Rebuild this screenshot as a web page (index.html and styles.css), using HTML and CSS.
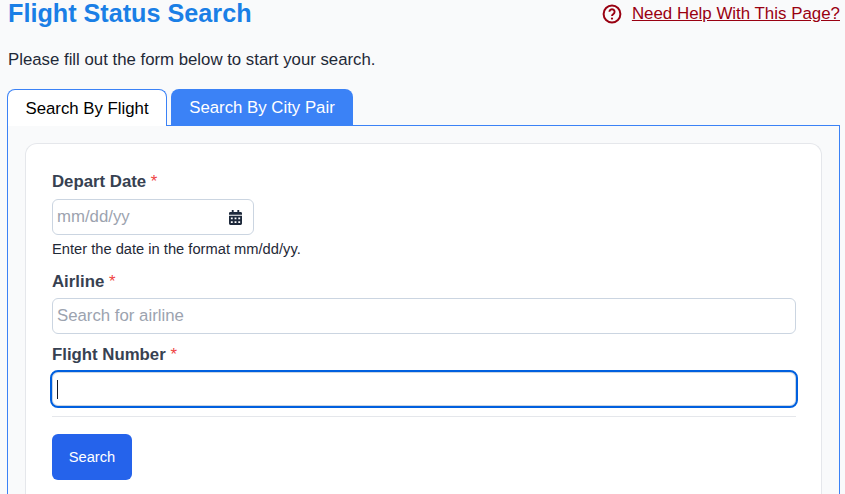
FILE: index.html
```html
<!DOCTYPE html>
<html>

<head>
	<link rel="stylesheet" href="styles.css">
</head>

<body>
	<div class="top">
		<h1>Flight Status Search</h1>
		<div class="help">
			<svg class="help-icon" viewBox="0 0 20 20" width="20" height="20">
				<circle cx="10" cy="10" r="8.4" fill="none" stroke="#990011" stroke-width="2"></circle>
				<path d="M7.4 7.8a2.6 2.6 0 1 1 3.9 2.3c-.9.5-1.3 1-1.3 1.9" fill="none" stroke="#990011" stroke-width="1.9"></path>
				<circle cx="10" cy="14.6" r="1.15" fill="#990011"></circle>
			</svg>
			<a href="#">Need Help With This Page?</a>
		</div>
	</div>
	<p class="intro">Please fill out the form below to start your search.</p>
	<div class="tabs">
		<div class="tab active">Search By Flight</div>
		<div class="tab">Search By City Pair</div>
	</div>
	<div class="panel">
		<form class="card">
			<label class="lbl">Depart Date <span class="req">*</span></label>
			<div class="field date">
				<span class="ph">mm/dd/yy</span>
				<svg class="cal" viewBox="0 0 14 16" width="13" height="15">
					<path fill="#1e293b" d="M3 0h2v2h4V0h2v2h1.500A1.500 1.500 0 0 1 14 3.500V5H0V3.500A1.500 1.500 0 0 1 1.500 2H3z"></path>
					<path fill="#1e293b" fill-rule="evenodd" d="M0 6h14v8.500a1.500 1.500 0 0 1-1.500 1.500h-11A1.500 1.500 0 0 1 0 14.500zM2 8v2h2V8zm4 0v2h2V8zm4 0v2h2V8zM2 12v2h2v-2zm4 0v2h2v-2zm4 0v2h2v-2z"></path>
				</svg>
			</div>
			<p class="hint">Enter the date in the format mm/dd/yy.</p>
			<label class="lbl lbl-airline">Airline <span class="req">*</span></label>
			<div class="field"><span class="ph">Search for airline</span></div>
			<label class="lbl lbl-flight">Flight Number <span class="req">*</span></label>
			<div class="field focus"><span class="caret"></span></div>
			<hr>
			<button type="button">Search</button>
		</form>
	</div>
</body>

</html>
```

FILE: styles.css
```css
html, body {
	height: 494px;
	overflow: hidden;
}

body {
	font-family: 'Liberation Sans', Arial, sans-serif;
	background-color: #f9fafb;
	color: #111827;
	margin: 0;
	padding: 0 5px 0 7px;
	box-sizing: border-box;
}

.top {
	display: flex;
	justify-content: space-between;
	align-items: center;
	height: 28px;
}

h1 {
	align-self: flex-start;
	margin: 0 0 0 1px;
	font-size: 25.2px;
	line-height: 26px;
	color: #1a7fe6;
}

.help {
	display: flex;
	align-items: center;
	gap: 10px;
	font-size: 16.9px;
}

.help a {
	color: #990011;
}

.intro {
	margin: 22px 0 0 1px;
	font-size: 16.8px;
	line-height: 19px;
	color: #1f2937;
}

.tabs {
	display: flex;
	gap: 4px;
	margin-top: 20px;
	height: 37px;
	position: relative;
	z-index: 1;
}

.tab {
	width: 182px;
	height: 36px;
	box-sizing: border-box;
	background-color: #3b82f6;
	color: white;
	border-radius: 8px 8px 0 0;
	font-size: 16.8px;
	line-height: 37px;
	text-align: center;
}

.tab.active {
	width: 160px;
	height: 37px;
	background-color: white;
	color: black;
	border: 1px solid #3b82f6;
	border-bottom: none;
	line-height: 37px;
}

.panel {
	box-sizing: border-box;
	height: 369px;
	margin-top: -1px;
	padding: 17px 17px 0;
	border: 1px solid #3b82f6;
	border-bottom: none;
	overflow: hidden;
}

.card {
	box-sizing: border-box;
	height: 351px;
	background-color: white;
	border: 1px solid #e5e7eb;
	border-bottom: none;
	border-radius: 12px 12px 0 0;
	padding: 28px 25px 0 26px;
}

.lbl {
	display: block;
	font-size: 16.8px;
	font-weight: bold;
	line-height: 20px;
	color: #374151;
	margin-bottom: 7px;
}

.lbl-airline {
	margin-bottom: 6px;
}

.lbl-flight {
	margin-top: 11px;
}

.req {
	color: #ef4444;
	font-weight: normal;
}

.field {
	display: flex;
	align-items: center;
	justify-content: space-between;
	box-sizing: border-box;
	height: 36px;
	padding: 0 4px;
	background-color: white;
	border: 1px solid #cbd5e1;
	border-radius: 6px;
}

.date {
	width: 202px;
	padding-right: 11px;
}

.ph {
	font-size: 16.8px;
	color: #9ca3af;
}

.hint {
	margin: 6px 0 15px;
	font-size: 14.7px;
	line-height: 16px;
	color: #1f2937;
}

.focus {
	height: 34px;
	justify-content: flex-start;
	outline: 2px solid #0060df;
}

.caret {
	display: block;
	width: 1px;
	height: 19px;
	background-color: #111827;
}

hr {
	border: none;
	border-top: 1px solid #e5e7eb;
	margin: 10px 0 17px;
}

button {
	display: block;
	width: 80px;
	height: 46px;
	background-color: #2563eb;
	color: white;
	border: none;
	border-radius: 6px;
	font-family: inherit;
	font-size: 14.7px;
}
```
